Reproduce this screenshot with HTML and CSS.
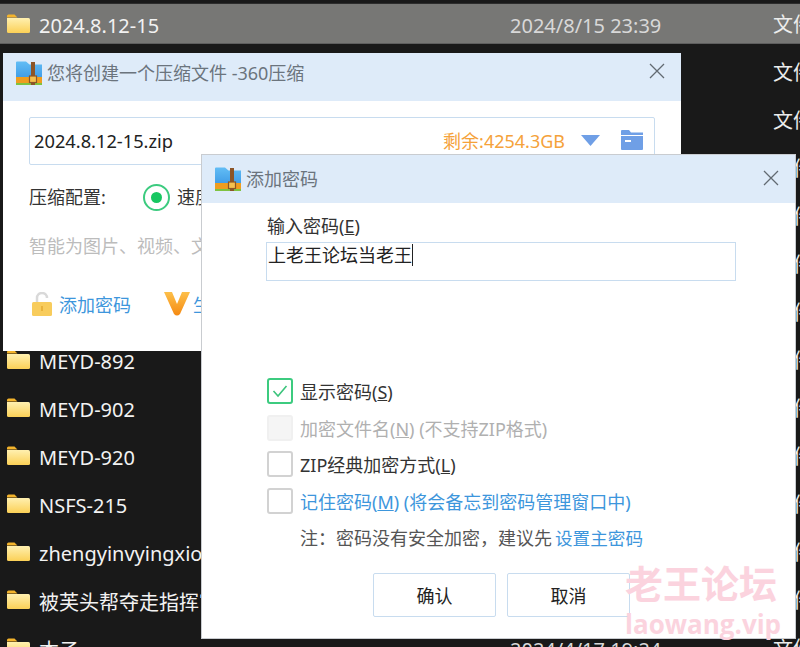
FILE: index.html
```html
<!DOCTYPE html>
<html lang="zh-CN">
<head>
<meta charset="UTF-8">
<meta name="viewport" content="width=device-width, initial-scale=1.0">
<title>添加密码</title>
<link rel="stylesheet" href="styles.css">
</head>
<body>

<svg class="defs" width="0" height="0">
    <defs>
        <linearGradient id="folderFill" x1="0" y1="0" x2="0" y2="1">
            <stop offset="0" stop-color="#fff0b0"/>
            <stop offset="1" stop-color="#fbd056"/>
        </linearGradient>
        <linearGradient id="zipFill" x1="0" y1="0" x2="0" y2="1">
            <stop offset="0" stop-color="#62bdf5"/>
            <stop offset="1" stop-color="#3f9be6"/>
        </linearGradient>
        <linearGradient id="vFill" x1="0" y1="0" x2="0" y2="1">
            <stop offset="0" stop-color="#fdc04a"/>
            <stop offset="1" stop-color="#f58a12"/>
        </linearGradient>
        <symbol id="folder" viewBox="0 0 23 19">
            <path d="M0 2a1.500 1.500 0 0 1 1.500-1.500h6l3 3h-10.500z" fill="#f4b42c"/>
            <path d="M0 4h21.500a1.500 1.500 0 0 1 1.500 1.500v12a1.500 1.500 0 0 1-1.500 1.500h-20a1.500 1.500 0 0 1-1.500-1.500z" fill="url(#folderFill)"/>
        </symbol>
        <symbol id="zip" viewBox="0 0 26 24">
            <path d="M0 1.500a1 1 0 0 1 1-1h9l3.500 3h12.500v14h-26z" fill="url(#zipFill)"/>
            <rect y="16" width="26" height="6" fill="#ef9d1f"/>
            <rect y="22" width="26" height="2" fill="#7fc241"/>
            <rect x="15" y="1" width="4" height="23" fill="#8c5527"/>
            <rect x="13.500" y="15" width="7" height="6.500" fill="#f4c04e" stroke="#8c5527" stroke-width="1.200"/>
        </symbol>
        <symbol id="close" viewBox="0 0 16 16">
            <path d="M1 1l14 14M15 1l-14 14" stroke="#626a72" stroke-width="1.300" fill="none"/>
        </symbol>
    </defs>
</svg>

<div class="file-list">
    <div class="file-row active">
        <svg class="folder-icon"><use href="#folder"/></svg>
        <span class="file-name">2024.8.12-15</span>
        <span class="file-date">2024/8/15 23:39</span>
        <span class="file-type">文件夹</span>
    </div>
    <div class="file-row"><span></span><span></span><span></span><span class="file-type">文件夹</span></div>
    <div class="file-row"><span></span><span></span><span></span><span class="file-type">文件夹</span></div>
    <div class="file-row"><span></span><span></span><span></span><span class="file-type">文件夹</span></div>
    <div class="file-row"><span></span><span></span><span></span><span class="file-type">文件夹</span></div>
    <div class="file-row"><span></span><span></span><span></span><span class="file-type">文件夹</span></div>
    <div class="file-row"><span></span><span></span><span></span><span class="file-type">文件夹</span></div>
    <div class="file-row">
        <svg class="folder-icon"><use href="#folder"/></svg>
        <span class="file-name">MEYD-892</span><span></span>
        <span class="file-type">文件夹</span>
    </div>
    <div class="file-row">
        <svg class="folder-icon"><use href="#folder"/></svg>
        <span class="file-name">MEYD-902</span><span></span>
        <span class="file-type">文件夹</span>
    </div>
    <div class="file-row">
        <svg class="folder-icon"><use href="#folder"/></svg>
        <span class="file-name">MEYD-920</span><span></span>
        <span class="file-type">文件夹</span>
    </div>
    <div class="file-row">
        <svg class="folder-icon"><use href="#folder"/></svg>
        <span class="file-name">NSFS-215</span><span></span>
        <span class="file-type">文件夹</span>
    </div>
    <div class="file-row">
        <svg class="folder-icon"><use href="#folder"/></svg>
        <span class="file-name">zhengyinvyingxiong</span><span></span>
        <span class="file-type">文件夹</span>
    </div>
    <div class="file-row">
        <svg class="folder-icon"><use href="#folder"/></svg>
        <span class="file-name">被芙头帮夺走指挥官</span><span></span>
        <span class="file-type">文件夹</span>
    </div>
    <div class="file-row">
        <svg class="folder-icon"><use href="#folder"/></svg>
        <span class="file-name">本子</span>
        <span class="file-date">2024/4/17 19:24</span>
        <span class="file-type">文件夹</span>
    </div>
</div>

<!-- back window -->
<div class="window window-zip">
    <div class="window-head">
        <svg class="zip-icon"><use href="#zip"/></svg>
        <span class="window-title">您将创建一个压缩文件 -360压缩</span>
        <svg class="close-icon"><use href="#close"/></svg>
    </div>
    <div class="zip-body">
        <div class="path-box">
            <span class="path-name">2024.8.12-15.zip</span>
            <span class="path-free">剩余:4254.3GB</span>
            <svg class="path-arrow" viewBox="0 0 19 11"><path d="M0 0h19l-9.500 11z" fill="#6f9fe6"/></svg>
            <svg class="path-folder" viewBox="0 0 22 20">
                <path d="M0 1a1 1 0 0 1 1-1h7l2 2.500h12v2.500h-22z" fill="#6f9fe6"/>
                <path d="M0 6h22v13a1 1 0 0 1-1 1h-20a1 1 0 0 1-1-1z" fill="#6f9fe6"/>
                <rect x="4" y="10" width="6" height="2" fill="#fff"/>
            </svg>
        </div>
        <div class="config-row">
            <span class="config-label">压缩配置:</span>
            <span class="radio"><span class="radio-dot"></span></span>
            <span class="config-value">速度最快</span>
        </div>
        <div class="config-hint">智能为图片、视频、文档选择压缩方式</div>
        <div class="zip-links">
            <span class="zip-link">
                <svg class="lock-icon" viewBox="0 0 20 24">
                    <path d="M5 11v-5a5 5 0 0 1 10 0" stroke="#d9d9d9" stroke-width="2.500" fill="none"/>
                    <rect y="10" width="20" height="14" rx="1.500" fill="#f8cc5c"/>
                    <rect x="9" y="14" width="2" height="5" fill="#e9b23c"/>
                </svg>
                <span>添加密码</span>
            </span>
            <span class="zip-link">
                <svg class="vip-icon" viewBox="0 0 26 24">
                    <path d="M0 0h8l5 12 5-12h8l-10 22q-3 3-6 0z" fill="url(#vFill)"/>
                </svg>
                <span>生成自解压</span>
            </span>
        </div>
    </div>
</div>

<!-- front window -->
<div class="window window-pass">
    <div class="window-head">
        <svg class="zip-icon"><use href="#zip"/></svg>
        <span class="window-title">添加密码</span>
        <svg class="close-icon"><use href="#close"/></svg>
    </div>
    <div class="pass-body">
        <div class="pass-label">输入密码(<u>E</u>)</div>
        <div class="pass-input">上老王论坛当老王<span class="caret"></span></div>

        <div class="options">
            <div class="option">
                <span class="check checked">
                    <svg viewBox="0 0 16 14"><path d="M1.500 7l4.500 5 8.500-10" stroke="#3cc47c" stroke-width="1.600" fill="none"/></svg>
                </span>
                <span>显示密码(<u>S</u>)</span>
            </div>
            <div class="option disabled">
                <span class="check"></span>
                <span>加密文件名(<u>N</u>) (不支持ZIP格式)</span>
            </div>
            <div class="option">
                <span class="check"></span>
                <span>ZIP经典加密方式(<u>L</u>)</span>
            </div>
            <div class="option blue">
                <span class="check"></span>
                <span>记住密码(<u>M</u>) (将会备忘到密码管理窗口中)</span>
            </div>
            <div class="note">注：密码没有安全加密，建议先<span class="note-link">设置主密码</span></div>
        </div>

        <div class="buttons">
            <span class="btn">确认</span>
            <span class="btn">取消</span>
        </div>
    </div>
</div>

<div class="watermark">
    <div class="mark-cn">老王论坛</div>
    <div class="mark-en">laowang.vip</div>
</div>

</body>
</html>
```

FILE: styles.css
```css
html, body {
    height: 100%;
}

body {
    margin: 0;
    position: relative;
    height: 647px;
    overflow: hidden;
    background-color: #191919;
    font-family: "Noto Sans", "Noto Sans CJK SC", sans-serif;
    color: #333;
}

.defs {
    position: absolute;
}

/* file list behind the windows */
.file-list {
    padding-top: 4px;
    display: flex;
    flex-direction: column;
    gap: 9px;
}

.file-row {
    flex: none;
    height: 39px;
    display: grid;
    grid-template-columns: 32px 471px 263px 60px;
    align-items: center;
    padding-left: 7px;
    color: #e8e8e8;
    font-size: 20px;
    white-space: nowrap;
}

.file-row.active {
    background-color: #777775;
    box-shadow: 0 1px 0 #5e5e5e, 0 -1px 0 #2c2c2c;
}

.folder-icon {
    width: 23px;
    height: 19px;
}

.file-name {
    color: #f2f2f2;
    overflow: hidden;
    padding-top: 3px;
}

.file-date {
    color: #d8d8d8;
    padding-top: 3px;
}

.file-type {
    color: #ececec;
}

/* windows */
.window {
    position: absolute;
    background-color: #fff;
    overflow: hidden;
}

.window-zip {
    left: 3px;
    top: 53px;
    width: 678px;
    height: 298px;
}

.window-pass {
    left: 202px;
    top: 155px;
    width: 593px;
    height: 483px;
    box-shadow: 0 0 0 1px #c9ccd0;
}

.window-head {
    height: 48px;
    box-sizing: border-box;
    display: flex;
    align-items: center;
    background-color: #deebf9;
    padding: 0 16px 0 13px;
}

.window-zip .window-head {
    padding-bottom: 9px;
}

.window-zip .close-icon {
    margin-top: -4px;
}

.zip-icon {
    width: 26px;
    height: 24px;
    flex: none;
}

.window-title {
    margin-left: 5px;
    margin-top: -2px;
    flex: 1;
    font-size: 18px;
    color: #6b747d;
}

.close-icon {
    width: 16px;
    height: 16px;
    flex: none;
    margin-top: -2px;
}

/* back window body */
.zip-body {
    padding: 16px 26px 0;
}

.path-box {
    height: 44px;
    border: 1px solid #c8dcef;
    display: flex;
    align-items: center;
    padding: 0 11px 2px 4px;
    border-radius: 2px;
}

.path-name {
    flex: 1;
    font-size: 18.250px;
    color: #222;
}

.path-free {
    font-size: 18px;
    color: #f5a23a;
}

.path-arrow {
    width: 19px;
    height: 11px;
    margin-left: 16px;
}

.path-folder {
    width: 22px;
    height: 20px;
    margin-left: 21px;
}

.config-row {
    display: flex;
    align-items: center;
    margin-top: 19px;
    font-size: 18px;
    white-space: nowrap;
}

.config-label {
    width: 114px;
    margin-top: -4px;
}

.config-value {
    margin-top: -4px;
}

.radio {
    width: 27px;
    height: 27px;
    box-sizing: border-box;
    border: 2px solid #3ccb7f;
    border-radius: 50%;
    display: flex;
    align-items: center;
    justify-content: center;
    margin-right: 7px;
}

.radio-dot {
    width: 11px;
    height: 11px;
    border-radius: 50%;
    background-color: #18c762;
}

.config-hint {
    margin-top: 21px;
    font-size: 18px;
    color: #bcbcbc;
    white-space: nowrap;
}

.zip-links {
    display: flex;
    gap: 33px;
    margin-top: 33px;
    font-size: 18px;
    color: #3d96dc;
}

.zip-link {
    display: flex;
    align-items: center;
    gap: 7px;
    white-space: nowrap;
}

.lock-icon {
    width: 20px;
    height: 24px;
    margin-left: 3px;
}

.vip-icon {
    width: 26px;
    height: 24px;
    margin-right: -4px;
}

/* front window body */
.pass-body {
    padding: 10px 59px 0 64px;
    display: flex;
    flex-direction: column;
    height: 425px;
}

.pass-label {
    font-size: 18px;
    line-height: 26px;
    margin-left: 1px;
}

.pass-input {
    height: 37px;
    border: 1px solid #c8dcef;
    font-size: 18px;
    line-height: 24px;
    padding-left: 1px;
    color: #222;
    margin-top: 3px;
}

.caret {
    display: inline-block;
    width: 1px;
    height: 22px;
    background-color: #222;
    vertical-align: -4px;
}

.options {
    margin-top: 97px;
    display: flex;
    flex-direction: column;
    gap: 10.500px;
    margin-left: 1px;
}

.option {
    display: flex;
    align-items: center;
    gap: 7px;
    height: 26px;
    font-size: 18px;
    white-space: nowrap;
}

.option.disabled {
    color: #b0b0b0;
}

.option.blue {
    color: #3d96dc;
}

.check {
    width: 26px;
    height: 26px;
    box-sizing: border-box;
    border: 2px solid #d2d2d2;
    border-radius: 3px;
    background-color: #fff;
    display: flex;
    align-items: center;
    justify-content: center;
    flex: none;
}

.check.checked {
    border-color: #3ccb7f;
}

.check svg {
    width: 16px;
    height: 14px;
}

.option.disabled .check {
    background-color: #f5f5f5;
    border-color: #f0f0f0;
}

.note {
    margin-left: 33px;
    line-height: 26px;
    margin-top: 1px;
    font-size: 18px;
    color: #555;
    white-space: nowrap;
}

.note-link {
    margin-left: 3px;
    font-size: 17.600px;
    color: #3d96dc;
}

.buttons {
    margin-top: 22px;
    display: flex;
    gap: 11px;
    margin-left: 107px;
}

.btn {
    width: 123px;
    height: 44px;
    box-sizing: border-box;
    border: 1px solid #c8dcef;
    border-radius: 2px;
    display: flex;
    align-items: center;
    justify-content: center;
    font-size: 18px;
    color: #222;
}

/* watermark over everything */
.watermark {
    position: absolute;
    left: 625px;
    top: 558px;
    color: #fbd3de;
    font-weight: 700;
    white-space: nowrap;
}

.mark-cn {
    font-size: 38px;
    line-height: 50px;
}

.mark-en {
    font-size: 26px;
    line-height: 32px;
    font-family: "Open Sans", "Noto Sans", sans-serif;
}
```
